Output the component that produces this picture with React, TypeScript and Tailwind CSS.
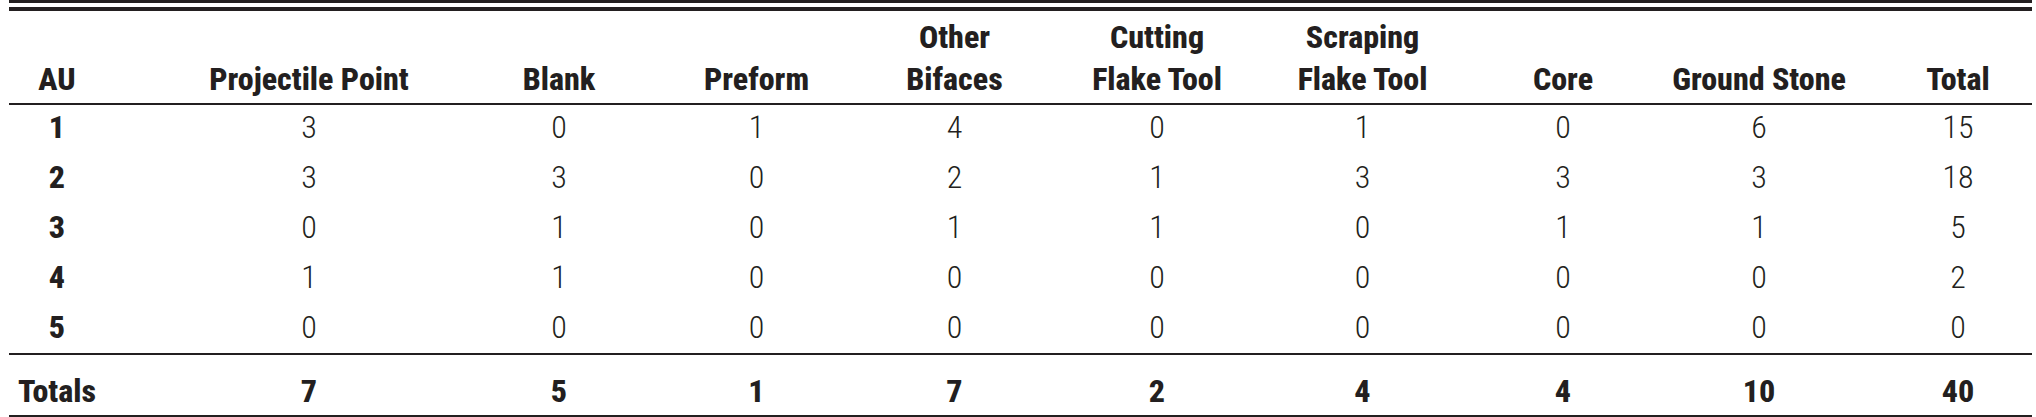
const headers: string[][] = [
  ["AU"],
  ["Projectile Point"],
  ["Blank"],
  ["Preform"],
  ["Other", "Bifaces"],
  ["Cutting", "Flake Tool"],
  ["Scraping", "Flake Tool"],
  ["Core"],
  ["Ground Stone"],
  ["Total"],
];

const rows: (string | number)[][] = [
  [1, 3, 0, 1, 4, 0, 1, 0, 6, 15],
  [2, 3, 3, 0, 2, 1, 3, 3, 3, 18],
  [3, 0, 1, 0, 1, 1, 0, 1, 1, 5],
  [4, 1, 1, 0, 0, 0, 0, 0, 0, 2],
  [5, 0, 0, 0, 0, 0, 0, 0, 0, 0],
];

const totals: (string | number)[] = ["Totals", 7, 5, 1, 7, 2, 4, 4, 10, 40];

const colPad = ["", "pl-[79px]", "pl-[26px]", "", "", "", "", "", "", "pl-[27px]"];

const grid =
  "grid grid-cols-[96px_329px_224px_197px_199px_206px_205px_196px_196px_175px]";

export default function App() {
  return (
    <div
      className="w-[2036px] h-[417px] bg-white text-[#231f20] text-[32px] overflow-hidden"
      style={{ fontFamily: "'Roboto Condensed', 'Liberation Sans Narrow', sans-serif" }}
    >
      <div className="ml-[9px] w-[2023px]">
        <div className="h-[3px] bg-[#231f20]" />
        <div className="h-[4px] mt-[4px] bg-[#231f20]" />
        {/* header */}
        <div className={`${grid} h-[92px] font-extrabold leading-[42px]`}>
          {headers.map((h, i) => (
            <div key={i} className={`flex flex-col items-center justify-end pb-[3px] ${colPad[i]}`}>
              {h.map((line, j) => (
                <div key={j} className="whitespace-nowrap">
                  {line}
                </div>
              ))}
            </div>
          ))}
        </div>
        <div className="h-[2px] bg-[#231f20]" />
        {/* body */}
        {rows.map((r, ri) => (
          <div
            key={ri}
            className={`${grid} leading-[44px] ${ri === rows.length - 1 ? "h-[48px]" : "h-[50px]"}`}
          >
            {r.map((v, ci) => (
              <div
                key={ci}
                className={`flex justify-center ${colPad[ci]} ${ci === 0 ? "font-extrabold" : "font-light"}`}
              >
                {v}
              </div>
            ))}
          </div>
        ))}
        <div className="h-[2px] bg-[#231f20]" />
        <div className={`${grid} h-[60px] pt-[14px] leading-[44px] font-extrabold`}>
          {totals.map((v, ci) => (
            <div key={ci} className={`flex justify-center ${colPad[ci]}`}>
              {v}
            </div>
          ))}
        </div>
        <div className="h-[2px] bg-[#231f20]" />
      </div>
    </div>
  );
}
